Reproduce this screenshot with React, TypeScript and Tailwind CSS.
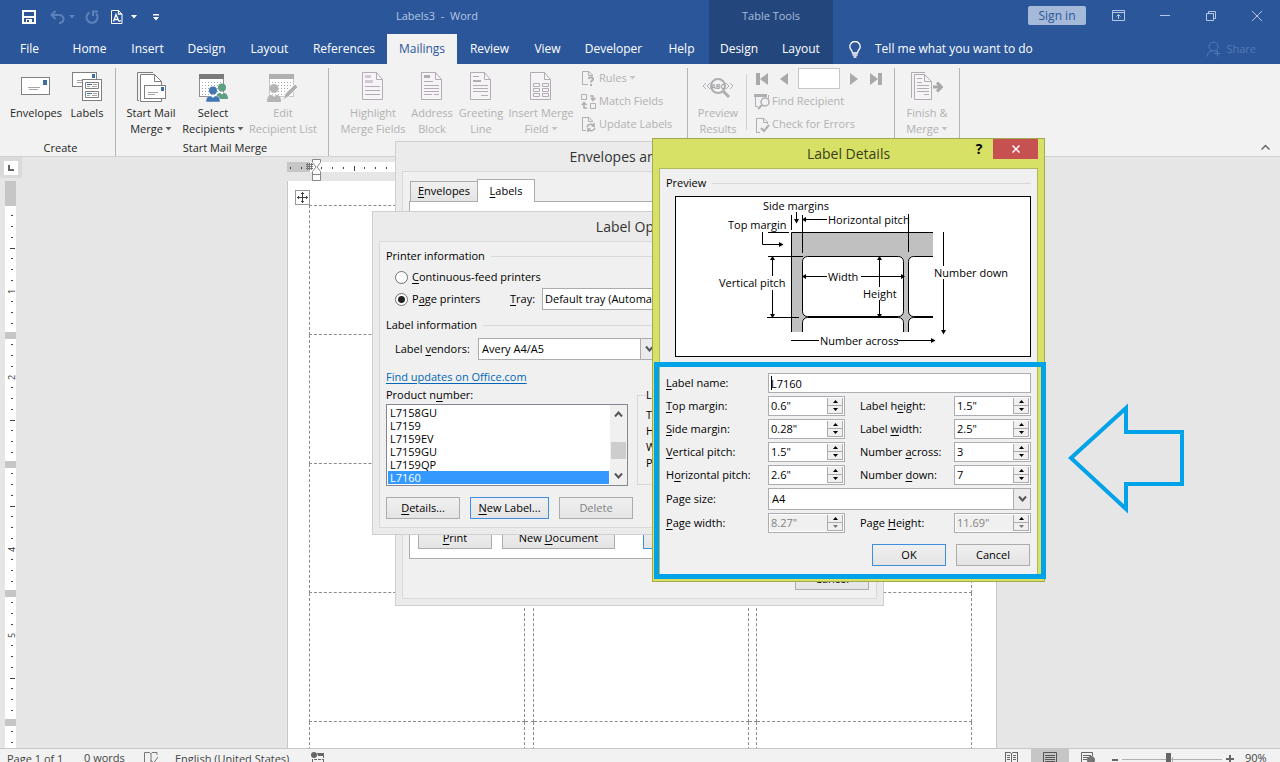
import { useState } from "react";
import type { ReactNode } from "react";

type BigButtonProps = {
  lines: string[];
  width: string;
  icon: ReactNode;
  disabled?: boolean;
  menu?: boolean;
};

type SpinProps = {
  id: string;
  label: ReactNode;
  value: string;
  disabled?: boolean;
};

const GREY = "#b1adb3";

const U = ({ children }: { children: string }) => (
  <span className="underline underline-offset-2">{children}</span>
);

const Caret = () => (
  <svg width="7" height="4" viewBox="0 0 7 4" className="inline-block ml-0.5 mb-0.5 opacity-70">
    <path d="M0.5 0h6L3.5 3.5z" fill="currentColor" />
  </svg>
);

const EnvelopeIcon = () => (
  <svg width="30" height="30" viewBox="0 0 30 30">
    <rect x="0.5" y="5.5" width="28" height="17" fill="#fff" stroke="#7f7f7f" />
    <rect x="22" y="8" width="4" height="5" fill="#3b6fa8" />
    <path d="M7 15.5h12M8 17.5h9" stroke="#a6a6a6" />
  </svg>
);

const LabelsIcon = () => (
  <svg width="30" height="30" viewBox="0 0 30 30">
    <rect x="0.5" y="0.5" width="24" height="14" fill="#fff" stroke="#7f7f7f" />
    <rect x="20" y="2" width="3" height="4" fill="#3b6fa8" />
    <path d="M5 8.5h7M5 10.5h5" stroke="#a6a6a6" />
    <rect x="10.5" y="7.5" width="19" height="21" fill="#fff" stroke="#7f7f7f" />
    <path d="M13.5 10.5h13v6h-13zM13.5 19.5h13v6h-13z" fill="#fff" stroke="#7f7f7f" />
    <path d="M15 12.5h5M15 21.5h5" stroke="#3b6fa8" />
    <path d="M21 12.5h4M15 14.5h3M20 14.5h5M21 21.5h4M15 23.5h3M20 23.5h5" stroke="#a6a6a6" />
  </svg>
);

const StartMergeIcon = () => (
  <svg width="30" height="30" viewBox="0 0 30 30">
    <path d="M3 28.5H1.5V0.5H17" fill="none" stroke="#7f7f7f" />
    <path d="M4.5 29.5V2.5H18.500L25.5 9.5V29.5z" fill="#fff" stroke="#7f7f7f" />
    <path d="M18.5 2.5V9.5H25.5" fill="none" stroke="#7f7f7f" />
    <rect x="8.5" y="13.5" width="21" height="13" fill="#fff" stroke="#7f7f7f" />
    <rect x="25" y="15" width="3" height="4" fill="#3b6fa8" />
    <path d="M12 20.5h10M12 22.5h7" stroke="#a6a6a6" />
  </svg>
);

const RecipientsIcon = ({ edit }: { edit?: boolean }) => (
  <svg width="32" height="30" viewBox="0 0 32 30">
    <rect x="2.5" y="2.5" width="24" height="22" fill="#fff" stroke={edit ? "#c9c6ca" : "#8f8f8f"} />
    <rect x="2" y="2" width="25" height="5" fill={edit ? "#b0b0b0" : "#7a7a7a"} />
    {[10, 13, 16, 19, 22].map((y) => (
      <path key={y} d={`M5 ${y}.5H25`} stroke="#a8a8a8" strokeDasharray="1 2" />
    ))}
    {edit ? (
      <>
        <circle cx="7" cy="16.5" r="4.5" fill="#b5b5b5" />
        <path d="M0 30c0-5 2-7 4-7h6c2 0 4 2 4 7z" fill="#b5b5b5" />
        <path d="M4.5 22.5L7 25l2.5-2.5" fill="#f2f2f2" />
        <path d="M16 28l2-6L28 12l3 3-10 10z" fill="#b0b0b0" stroke="#f2f2f2" />
      </>
    ) : (
      <>
        <circle cx="25" cy="15.5" r="4" fill="#5f9f82" />
        <path d="M19 27c0-4 2-6 3-6h5c2 0 4 2 4 6z" fill="#5f9f82" />
        <path d="M23 20.5l2 2 2-2" fill="#fff" />
        <circle cx="16" cy="18.5" r="4" fill="#3f76b3" />
        <path d="M9 30c0-5 2-6 4-6h6c2 0 4 1 4 6z" fill="#3f76b3" stroke="#f2f2f2" strokeWidth="0.5" />
        <path d="M13.5 23.5L16 26l2.5-2.5" fill="#fff" />
      </>
    )}
  </svg>
);

const PageIcon = ({ kind }: { kind: "highlight" | "address" | "greeting" | "insert" }) => (
  <svg width="22" height="30" viewBox="0 0 22 30">
    <path d="M0.5 0.5H14.5L20.5 7.5V27.5H0.5z" fill="#f7f4f8" stroke={GREY} />
    <path d="M14.5 0.5V7.5H20.5" fill="none" stroke={GREY} />
    {kind === "highlight" && (
      <>
        <path d="M3 4.5h6M3 9.5h8" stroke="#cfcbd1" strokeWidth="3" />
        <path d="M3 14.5h15M3 18.5h15M3 22.5h15" stroke={GREY} />
      </>
    )}
    {kind === "address" && (
      <>
        <path d="M3 4.5h6" stroke={GREY} strokeWidth="3" />
        <path d="M3 9.5h9M3 13.5h15M3 16.5h15M3 19.5h15M3 22.5h8M13 22.5h5" stroke={GREY} />
      </>
    )}
    {kind === "greeting" && (
      <>
        <path d="M3 9h8" stroke={GREY} strokeWidth="2" />
        <path d="M3 4.5h6M3 13.5h15M3 16.5h15M3 19.5h15M11 23.5h7" stroke={GREY} />
      </>
    )}
    {kind === "insert" && (
      <path d="M3.5 11.5h6v3h-6zM12.5 11.5h6v3h-6zM3.5 16.5h6v3h-6zM12.5 16.5h6v3h-6zM3.5 21.5h6v3h-6zM12.5 21.5h6v3h-6z" fill="none" stroke={GREY} />
    )}
  </svg>
);

const PreviewIcon = () => (
  <svg width="32" height="30" viewBox="0 0 32 30">
    <path d="M4 11l-3 3 3 3M8 11l-3 3 3 3M24 11l3 3-3 3M28 11l3 3-3 3" fill="none" stroke={GREY} />
    <circle cx="16" cy="14" r="7" fill="#f4f4f4" stroke={GREY} strokeWidth="2" />
    <path d="M21 19l6 6" stroke={GREY} strokeWidth="3" />
    <text x="16" y="16.5" fontSize="7" fontWeight="700" textAnchor="middle" fill="#a5a3a7">ABC</text>
  </svg>
);

const FinishIcon = () => (
  <svg width="32" height="30" viewBox="0 0 32 30">
    <path d="M0.5 26V0.5H14" fill="none" stroke={GREY} />
    <path d="M3.5 2.5H13.5L20.5 9.5V27.5H3.5z" fill="#f7f4f8" stroke={GREY} />
    <path d="M13.5 2.5V9.5H20.5M6 6.5h5M6 10.5h5M6 13.5h12M6 16.5h12M6 19.5h12M13 22.5h5" fill="none" stroke={GREY} />
    <path d="M22 15h8M26 10.5l4.5 4.5L26 19.5" fill="none" stroke="#a8a8a8" strokeWidth="3" />
  </svg>
);

const SmallIcon = ({ kind }: { kind: string }) => (
  <svg width="16" height="16" viewBox="0 0 16 16" fill="none" stroke={GREY}>
    {kind === "rules" && (
      <>
        <path d="M7 13.5H1.5V0.5H8L11.5 4V5M7.5 0.5V4.5H11" />
        <path d="M8 8c0-2.5 4-2.5 4 0 0 1.5-2 1.5-2 3.5M10 13v2" strokeWidth="2" />
      </>
    )}
    {kind === "match" && (
      <>
        <path d="M0.5 0.5h5v5h-5zM9.5 9.5h5v5h-5z" />
        <path d="M9 2h3v4M10 4l2 2.5L14.5 4M6 14H3V9M1 11l2-2.5L5.5 11" strokeWidth="1.5" />
      </>
    )}
    {kind === "update" && (
      <>
        <path d="M5 13.5H1.5V0.5H8L11.5 4V5M7.5 0.5V4.5H11" />
        <path d="M6 10c1-3 5-4 7-1V6M14 11c-1 3-5 4-7 1v3M13.5 9h-3M6.5 12h3" strokeWidth="1.5" />
      </>
    )}
    {kind === "find" && (
      <>
        <path d="M4 12.5H1.5V3M14.5 5V1" />
        <path d="M0 1.5h13" strokeWidth="3" />
        <circle cx="11" cy="8" r="4" strokeWidth="1.5" />
        <path d="M8 11l-4 4" strokeWidth="2" />
      </>
    )}
    {kind === "check" && (
      <>
        <path d="M6 15.5H2.5V1.5H10L13.5 5V7M9.5 1.5V5.5H13" />
        <path d="M7 11l3 3 5-6" strokeWidth="2" />
      </>
    )}
  </svg>
);

const BigButton = ({ lines, width, icon, disabled, menu }: BigButtonProps) => (
  <button
    disabled={disabled}
    className={`${width} flex flex-col items-center text-[11px] leading-4 whitespace-nowrap ${
      disabled ? "text-[#b1b1b1]" : "text-[#262626]"
    }`}
  >
    <span className="h-9 flex items-center">{icon}</span>
    {lines.map((line, i) => (
      <span key={line}>
        {line}
        {menu && i === lines.length - 1 && <Caret />}
      </span>
    ))}
  </button>
);

const SmallButton = ({ kind, label, menu }: { kind: string; label: string; menu?: boolean }) => (
  <button disabled className="h-[23px] flex items-center gap-0.5 text-[11px] text-[#b1b1b1] whitespace-nowrap">
    <SmallIcon kind={kind} />
    <span>
      {label}
      {menu && <Caret />}
    </span>
  </button>
);

const Group = ({ label, className, children }: { label?: string; className: string; children: ReactNode }) => (
  <div className={`${className} shrink-0 h-[88px] mt-1 border-r border-[#b5b5b5] flex flex-col justify-between text-[#262626]`}>
    <div className="flex items-start pt-px">{children}</div>
    <div className="text-[11px] leading-4 text-center">{label}</div>
  </div>
);

const Ribbon = () => (
  <div className="h-[93px] shrink-0 bg-[#f2f2f2] border-b border-[#d2d2d2] flex">
    <Group label="Create" className="w-[116px] pl-1.5">
      <BigButton lines={["Envelopes"]} width="w-[60px]" icon={<EnvelopeIcon />} />
      <BigButton lines={["Labels"]} width="w-[42px]" icon={<LabelsIcon />} />
    </Group>
    <Group label="Start Mail Merge" className="w-[213px] pl-1.5">
      <BigButton lines={["Start Mail", "Merge"]} width="w-[58px]" icon={<StartMergeIcon />} menu />
      <BigButton lines={["Select", "Recipients"]} width="w-[66px]" icon={<RecipientsIcon />} menu />
      <BigButton lines={["Edit", "Recipient List"]} width="w-[74px]" icon={<RecipientsIcon edit />} disabled />
    </Group>
    <Group className="w-[359px] pl-2">
      <BigButton lines={["Highlight", "Merge Fields"]} width="w-[72px]" icon={<PageIcon kind="highlight" />} disabled />
      <BigButton lines={["Address", "Block"]} width="w-[46px]" icon={<PageIcon kind="address" />} disabled />
      <BigButton lines={["Greeting", "Line"]} width="w-[52px]" icon={<PageIcon kind="greeting" />} disabled />
      <BigButton lines={["Insert Merge", "Field"]} width="w-[68px]" icon={<PageIcon kind="insert" />} disabled menu />
      <div className="pl-1.5 -mt-0.5">
        <SmallButton kind="rules" label="Rules" menu />
        <SmallButton kind="match" label="Match Fields" />
        <SmallButton kind="update" label="Update Labels" />
      </div>
    </Group>
    <Group className="w-[207px] pl-1.5">
      <BigButton lines={["Preview", "Results"]} width="w-[48px]" icon={<PreviewIcon />} disabled />
      <div className="w-px h-14 mt-[5px] ml-1 bg-[#d0d0d0]" />
      <div className="pl-[7px] -mt-0.5">
        <div className="h-[23px] flex items-center text-[#a9a9a9]">
          <button disabled aria-label="First record" className="w-6 pl-0.5">
            <svg width="12" height="12" viewBox="0 0 12 12" fill="currentColor"><path d="M0 0h4v12H0zM12 0v12L4 6z" /></svg>
          </button>
          <button disabled aria-label="Previous record" className="w-5 pl-0.5">
            <svg width="8" height="12" viewBox="0 0 8 12" fill="currentColor"><path d="M8 0v12L0 6z" /></svg>
          </button>
          <input aria-label="Record" disabled className="w-[42px] h-[21px] bg-white border border-[#c6c6c6]" />
          <button disabled aria-label="Next record" className="w-7 pl-2.5">
            <svg width="8" height="12" viewBox="0 0 8 12" fill="currentColor"><path d="M0 0v12l8-6z" /></svg>
          </button>
          <button disabled aria-label="Last record" className="w-4 pl-0.5">
            <svg width="12" height="12" viewBox="0 0 12 12" fill="currentColor"><path d="M8 0h4v12H8zM0 0v12l8-6z" /></svg>
          </button>
        </div>
        <SmallButton kind="find" label="Find Recipient" />
        <SmallButton kind="check" label="Check for Errors" />
      </div>
    </Group>
    <Group className="w-[65px] pl-1">
      <BigButton lines={["Finish &", "Merge"]} width="w-[56px]" icon={<FinishIcon />} disabled menu />
    </Group>
    <button aria-label="Collapse ribbon" className="ml-auto self-end mr-2.5 mb-1.5">
      <svg width="9" height="6" viewBox="0 0 9 6" fill="none" stroke="#666" strokeWidth="1.5"><path d="M0.5 5.5l4-4 4 4" /></svg>
    </button>
  </div>
);

const QuickAccess = () => (
  <div className="flex items-center h-[34px] pl-[22px] w-[396px] text-white">
    <button aria-label="Save">
      <svg width="14" height="14" viewBox="0 0 14 14" fill="none" stroke="#fff" strokeWidth="2"><path d="M1 1h12v12H1zM2 7h10" /><path d="M4 13v-4h6v4" fill="#fff" stroke="none" /><path d="M5 10h2v2H5z" fill="#2b579a" stroke="none" /></svg>
    </button>
    <button disabled aria-label="Undo" className="ml-3.5 flex items-center gap-1 text-[#5c81bb]">
      <svg width="15" height="14" viewBox="0 0 15 14" fill="none" stroke="currentColor" strokeWidth="2"><path d="M5.5 1L1.5 5l4 4M2 5h7c6 0 6 8 0 8" /></svg>
      <svg width="6" height="4" viewBox="0 0 6 4" fill="currentColor"><path d="M0 0h6L3 3.5z" /></svg>
    </button>
    <button disabled aria-label="Redo" className="ml-2.5 text-[#5c81bb]">
      <svg width="14" height="14" viewBox="0 0 14 14" fill="none" stroke="currentColor" strokeWidth="2"><path d="M4.5 2.5A5.5 5.5 0 1 0 11 3.5M8 6V1.5h5" /></svg>
    </button>
    <button aria-label="Print preview" className="ml-3 flex items-center gap-2">
      <svg width="12" height="14" viewBox="0 0 12 14" fill="none" stroke="#fff"><path d="M0.5 0.5h7l3.5 3.5v9.5H0.5z" /><path d="M7.5 0.5v3.5H11M2.5 11.5L5 4.5l3 7M3.5 9.5h4M8 11.5l2-1" strokeWidth="1.3" /></svg>
      <svg width="6" height="4" viewBox="0 0 6 4" fill="currentColor"><path d="M0 0h6L3 3.5z" /></svg>
    </button>
    <button aria-label="Customize toolbar" className="ml-4">
      <svg width="6" height="7" viewBox="0 0 6 7" fill="#fff"><path d="M0 0h6v1.5H0zM0 3h6L3 6.5z" /></svg>
    </button>
  </div>
);

const tabs = [
  { name: "File", width: "w-[59px]" },
  { name: "Home", width: "w-[61px]" },
  { name: "Insert", width: "w-[55px]" },
  { name: "Design", width: "w-[63px]" },
  { name: "Layout", width: "w-[63px]" },
  { name: "References", width: "w-[86px]" },
  { name: "Mailings", width: "w-[70px]" },
  { name: "Review", width: "w-[65px]" },
  { name: "View", width: "w-[51px]" },
  { name: "Developer", width: "w-[81px]" },
  { name: "Help", width: "w-[55px]" },
];

const Header = () => {
  const [active, setActive] = useState("Mailings");
  return (
    <header className="shrink-0 h-16 bg-[#2b579a] flex text-white">
      <div className="flex flex-col">
        <div className="flex items-center">
          <QuickAccess />
          <h1 className="pb-0.5 text-[11px] text-[#b4c8e6] whitespace-pre">Labels3  -  Word</h1>
        </div>
        <nav className="flex h-[30px]">
          {tabs.map((tab) => (
            <button
              key={tab.name}
              onClick={() => setActive(tab.name)}
              className={`${tab.width} text-xs ${tab.name === active ? "bg-[#f2f2f2] text-[#2b579a]" : ""}`}
            >
              {tab.name}
            </button>
          ))}
        </nav>
      </div>
      <div className="w-[124px] bg-[#23477d] flex flex-col">
        <div className="h-[34px] pb-0.5 flex items-center justify-center text-[11px] text-[#a9bddb]">Table Tools</div>
        <div className="h-[30px] flex">
          <button className="w-[60px] text-xs">Design</button>
          <button className="w-[64px] text-xs">Layout</button>
        </div>
      </div>
      <div className="flex-1 flex flex-col text-[#b4c8e6]">
        <div className="h-[34px] flex items-center justify-end pb-[3px]">
          <button className="w-[58px] h-[19px] rounded-xs bg-[#a5b9d8] text-[#2b579a] text-xs leading-[18px]">Sign in</button>
          <button aria-label="Ribbon display options" className="ml-[26px]">
            <svg width="13" height="11" viewBox="0 0 13 11" fill="none" stroke="currentColor"><path d="M0.5 0.5h12v10h-12zM0.5 2.5h12M6.5 9V4.5M4.5 6.5l2-2 2 2" /></svg>
          </button>
          <button aria-label="Minimize" className="ml-[35px]">
            <svg width="10" height="11" viewBox="0 0 10 11" stroke="currentColor"><path d="M0 5.5h10" /></svg>
          </button>
          <button aria-label="Restore" className="ml-9">
            <svg width="10" height="11" viewBox="0 0 10 11" fill="none" stroke="currentColor"><path d="M0.5 3.5h7v7h-7zM2.5 3V1.5h7v7H8" /></svg>
          </button>
          <button aria-label="Close" className="ml-9 mr-[18px]">
            <svg width="10" height="10" viewBox="0 0 10 10" stroke="currentColor"><path d="M0 0l10 10M10 0L0 10" /></svg>
          </button>
        </div>
        <div className="h-[30px] flex items-center justify-between pl-4 pr-6">
          <button className="flex items-center gap-3.5 text-xs text-white">
            <svg width="12" height="17" viewBox="0 0 12 17" fill="none" stroke="#fff" strokeWidth="1.3"><path d="M3.5 12c0-3-2.7-3.5-2.7-6.3a5.2 5.2 0 0 1 10.4 0C11.2 8.5 8.5 9 8.5 12zM3.5 14h5M4.5 16h3" /></svg>
            Tell me what you want to do
          </button>
          <button disabled className="flex items-center gap-1 text-[11px] text-[#5478b3]">
            <svg width="16" height="16" viewBox="0 0 16 16" fill="none" stroke="currentColor"><circle cx="7.5" cy="5.5" r="4.5" /><path d="M1 15.5c0-3 2-5 5-5.5M9 9.5l2 1.5M11.5 9.5v6M8.5 12.5h6" /></svg>
            Share
          </button>
        </div>
      </div>
    </header>
  );
};

const VerticalRuler = () => (
  <svg width="11" height="567" viewBox="0 181 11 567" className="overflow-visible">
    <rect y="181" width="11" height="567" fill="#fff" />
    <rect y="181" width="11" height="25" fill="#c6c6c6" />
    {[0, 1, 2, 3, 4].map((n) => (
      <g key={n}>
        {n < 4 && <rect y={332 + n * 129} width="11" height="7" fill="#c6c6c6" />}
        {[215, 226, 237, 258, 269, 280, 301, 312, 323].map((y) => (
          <path key={y} d={`M6 ${y + n * 129 + 0.5}h2`} stroke="#444" />
        ))}
      </g>
    ))}
    {[248, 420, 506, 678].map((y) => (
      <path key={y} d={`M5 ${y + 0.5}h5`} stroke="#444" />
    ))}
    {[1, 2, 4, 5].map((n) => (
      <g key={n}>
        <rect x="4" y={201 + n * 86} width="7" height="9" fill="#fff" />
        <text transform={`translate(10 ${208 + n * 86}) rotate(-90)`} fontSize="9" fill="#333">{n}</text>
      </g>
    ))}
  </svg>
);

const HorizontalRuler = () => (
  <svg width="710" height="22" viewBox="287 159 710 22" className="block shrink-0">
    <rect x="287" y="162" width="710" height="10" fill="#fff" />
    <rect x="287" y="162" width="23" height="10" fill="#c6c6c6" />
    {[290, 301, 321, 332, 343, 364, 375, 386].map((x) => (
      <path key={x} d={`M${x}.5 167v2`} stroke="#444" />
    ))}
    <path d="M354.5 166v5" stroke="#444" />
    <path d="M306 164.5h7M306 166.5h7M306 168.5h7M307.5 163v7M309.5 163v7M311.5 163v7" stroke="#777" />
    <path d="M312.5 159.5h8v3l-3.5 4.5 3.5 4.5v9h-8v-9l3.5-4.5-3.5-4.5zM312.5 174.5h8" fill="#fff" stroke="#888" />
  </svg>
);

const cell = "border border-dashed border-[#8c8c8c]";

const DocumentArea = () => (
  <main className="flex-1 min-h-0 overflow-hidden bg-[#e6e6e6] flex">
    <div className="w-[22px] shrink-0">
      <div className="w-full h-[21px] bg-[#dadada] flex items-center justify-center">
        <button aria-label="Tab selector" className="w-3.5 h-3.5 bg-white flex items-center justify-center">
          <svg width="6" height="6" viewBox="0 0 6 6" stroke="#666" strokeWidth="2" fill="none"><path d="M1 0v5h5" /></svg>
        </button>
      </div>
      <div className="pt-[3px] pl-[5px]"><VerticalRuler /></div>
    </div>
    <div className="flex-1 flex flex-col items-center pr-[18px] pt-0.5">
      <HorizontalRuler />
      <div className="relative w-[710px] h-[580px] shrink-0 bg-white border-x border-[#c6c6c6] pt-6 pl-[21px]">
        <div className="absolute left-[7px] top-[9px] w-[15px] h-[15px] bg-white border border-[#999] flex items-center justify-center">
          <svg width="11" height="11" viewBox="0 0 11 11" stroke="#444" fill="none"><path d="M5.5 0v11M0 5.5h11M4 2l1.5-1.5L7 2M4 9l1.5 1.5L7 9M2 4L0.5 5.5 2 7M9 4l1.5 1.5L9 7" /></svg>
        </div>
        <table className="table-fixed border-collapse w-[663px]">
          <tbody>
            {[0, 1, 2, 3, 4].map((row) => (
              <tr key={row} className="h-[129px]">
                <td className={`${cell} w-[215px]`} />
                <td className={`${cell} w-[9px]`} />
                <td className={`${cell} w-[215px]`} />
                <td className={`${cell} w-[8px]`} />
                <td className={`${cell} w-[215px]`} />
              </tr>
            ))}
          </tbody>
        </table>
      </div>
    </div>
  </main>
);

const StatusBar = () => (
  <footer className="shrink-0 h-3.5 overflow-hidden bg-[#f2f2f2] border-t border-[#c6c6c6] flex items-start text-[11px] leading-4 text-[#444] whitespace-nowrap">
    <span className="pl-[7px] pt-0.5 w-[84px]">Page 1 of 1</span>
    <span className="pt-px w-[60px]">0 words</span>
    <svg width="14" height="12" viewBox="0 0 14 12" className="mt-[3px]" fill="none" stroke="#777"><path d="M0.5 12V0.5h5l1.5 1.5V12M6.5 2L8 0.5h5V3M7 8l2.5 3L14 5" /></svg>
    <span className="pl-[17px] pt-0.5 w-[153px]">English (United States)</span>
    <svg width="13" height="12" viewBox="0 0 13 12" className="mt-[3px]" fill="#666"><circle cx="3" cy="3" r="3" /><path d="M6 1h7v3H7z" /><path d="M1.5 7v5M12.5 3v9M3 7.5h9M3 10.5h9" stroke="#666" strokeDasharray="3 1" /></svg>
    <div className="ml-auto flex">
      <svg width="13" height="12" viewBox="0 0 13 12" className="mt-[3px]" fill="none" stroke="#666"><path d="M0.5 0v12M12.5 0v12M6.5 1v11M0 0.5h5l1.5 1 1.5-1h5M2 3.5h3M2 5.5h3M2 7.5h3M8 3.5h3M8 5.5h3M8 7.5h3" /></svg>
      <div className="ml-[13px] w-[38px] h-3.5 bg-[#c6c6c6] flex justify-center">
        <svg width="14" height="12" viewBox="0 0 14 12" className="mt-[3px]" fill="none" stroke="#555"><path d="M0.5 12V0.5h13V12M2 3.5h10M2 5.5h10M2 7.5h10M2 9.5h10" /></svg>
      </div>
      <svg width="15" height="12" viewBox="0 0 15 12" className="ml-3 mt-[3px]" fill="none" stroke="#666"><path d="M0.5 12V0.5h11V4M2 3.5h8M2 5.5h5M2 7.5h4" /><circle cx="10" cy="8" r="3.5" fill="#777" /></svg>
      <span className="ml-4 mt-2.5 w-1.5 h-0.5 bg-[#666]" />
      <svg width="100" height="12" viewBox="0 0 100 12" className="ml-1 mt-[3px]"><path d="M0 7.5h100M50.5 5v5" stroke="#b0b0b0" /><rect x="44" y="1" width="5" height="11" fill="#666" /></svg>
      <svg width="8" height="12" viewBox="0 0 8 12" className="ml-1 mt-[3px]" stroke="#666" strokeWidth="2"><path d="M0 7h8M4 3v8" /></svg>
      <span className="pl-[11px] pt-px w-[46px]">90%</span>
    </div>
  </footer>
);

const DialogButton = ({ children, primary, disabled, className = "w-[74px]" }: {
  children: ReactNode;
  primary?: boolean;
  disabled?: boolean;
  className?: string;
}) => (
  <button
    disabled={disabled}
    className={`${className} h-[22px] border bg-gradient-to-b from-[#f0f0f0] to-[#e4e4e4] text-[11px] leading-5 ${
      primary ? "border-[#3c8fde]" : "border-[#acacac]"
    } ${disabled ? "text-[#838383]" : "text-black"}`}
  >
    {children}
  </button>
);

const Section = ({ title, id }: { title: string; id: string }) => (
  <div className="flex items-center gap-1.5 leading-4">
    <h3 id={id}>{title}</h3>
    <div className="flex-1 h-px bg-[#d9d9d9]" />
  </div>
);

const Chevron = () => (
  <svg width="9" height="6" viewBox="0 0 9 6" fill="none" stroke="#555" strokeWidth="2"><path d="M1 0.5L4.5 4.5 8 0.5" /></svg>
);

const EnvelopesDialog = () => (
  <section aria-label="Envelopes and Labels" className="absolute left-[395px] top-[141px] w-[489px] h-[465px] bg-[#ebebeb] border border-[#cfcfcf] px-1.5 pb-1.5 flex flex-col text-[11px]">
    <h2 className="h-[29px] leading-[29px] text-sm text-center text-[#333]">Envelopes and Labels</h2>
    <div className="flex-1 bg-[#f0f0f0] border border-[#d9d9d9] pt-[7px] px-1.5 pb-2 flex flex-col">
      <div className="flex items-end pl-px">
        <button className="w-[67px] h-5 border border-b-0 border-r-0 border-[#acacac] bg-gradient-to-b from-[#f0f0f0] to-[#e4e4e4]"><U>E</U>nvelopes</button>
        <button className="relative w-[58px] h-[23px] -mb-px border border-b-0 border-[#acacac] bg-white"><U>L</U>abels</button>
      </div>
      <div className="h-[358px] bg-white border border-[#acacac] flex items-end gap-2.5 pl-2 pb-[9px]">
        <DialogButton><U>P</U>rint</DialogButton>
        <DialogButton className="w-[113px]">New <U>D</U>ocument</DialogButton>
        <span className="w-2" />
        <DialogButton primary className="w-[113px]"><U>O</U>ptions...</DialogButton>
      </div>
      <div className="flex-1 flex items-end justify-end pr-px"><DialogButton>Cancel</DialogButton></div>
    </div>
  </section>
);

const products = ["L7158GU", "L7159", "L7159EV", "L7159GU", "L7159QP", "L7160"];

const OptionsDialog = () => {
  const [selected, setSelected] = useState("L7160");
  return (
    <section aria-label="Label Options" className="absolute left-[372px] top-[211px] w-[538px] h-[324px] bg-[#ebebeb] border border-[#cfcfcf] px-1.5 pb-1.5 flex flex-col text-[11px]">
      <h2 className="h-[29px] leading-[29px] text-sm text-center text-[#333]">Label Options</h2>
      <div className="flex-1 bg-[#f0f0f0] border border-[#d9d9d9] px-1.5 pt-1.5">
        <Section title="Printer information" id="printer-info" />
        <label className="flex items-center gap-1 h-[26px] pl-[9px]">
          <input type="radio" name="printer" className="appearance-none w-[13px] h-[13px] rounded-full border border-[#707070] bg-white" />
          <span><U>C</U>ontinuous-feed printers</span>
        </label>
        <div className="flex items-center h-5 -mt-px pl-[9px]">
          <label className="flex items-center gap-1 w-[115px]">
            <input type="radio" name="printer" defaultChecked className="appearance-none w-[13px] h-[13px] rounded-full border border-[#707070] bg-white checked:bg-[radial-gradient(circle,#222_3px,white_4px)]" />
            <span>P<U>a</U>ge printers</span>
          </label>
          <label htmlFor="tray" className="w-8"><U>T</U>ray:</label>
          <select id="tray" className="appearance-none w-[250px] h-[22px] px-0.5 bg-white border border-[#acacac]">
            <option>Default tray (Automatically Select)</option>
          </select>
        </div>
        <div className="mt-2"><Section title="Label information" id="label-info" /></div>
        <div className="flex items-center pl-[9px] mt-[5px]">
          <label htmlFor="vendors" className="w-[83px]">Label <U>v</U>endors:</label>
          <div className="flex w-[180px]">
            <select id="vendors" className="appearance-none flex-1 h-[22px] px-[3px] bg-white border border-[#acacac]">
              <option>Avery A4/A5</option>
            </select>
            <span className="w-[18px] -ml-px border border-[#acacac] bg-[#ebebeb] flex items-center justify-center"><Chevron /></span>
          </div>
        </div>
        <div className="flex gap-[9px] mt-[9px] leading-4">
          <div className="w-[242px]">
            <a href="#updates" className="block h-[18px] text-[#0066b8] underline underline-offset-2">Find updates on Office.com</a>
            <div id="product-label" className="h-[17px]">Product n<U>u</U>mber:</div>
            <div className="h-[82px] border border-[#828790] bg-white flex">
              <ul role="listbox" aria-labelledby="product-label" className="flex-1 p-px">
                {products.map((name) => (
                  <li key={name} role="option" aria-selected={name === selected}>
                    <button
                      onClick={() => setSelected(name)}
                      className={`block w-full h-[13px] leading-[13px] pl-0.5 text-left text-[11px] ${
                        name === selected ? "bg-[#3399ff] text-white" : ""
                      }`}
                    >
                      {name}
                    </button>
                  </li>
                ))}
              </ul>
              <div className="w-[17px] bg-[#f0f0f0] flex flex-col items-center py-1.5">
                <span className="h-1.5 flex rotate-180"><Chevron /></span>
                <span className="w-[15px] h-[17px] mt-auto mb-3.5 bg-[#cdcdcd]" />
                <Chevron />
              </div>
            </div>
          </div>
          <fieldset className="flex-1 mt-[18px] h-[98px] border border-[#d9d9d9] pl-2">
            <legend>Label information</legend>
            <div className="pt-1">
              <p>Type:</p>
              <p>Height:</p>
              <p>Width:</p>
              <p>Page size:</p>
            </div>
          </fieldset>
        </div>
        <div className="flex gap-2.5 mt-[11px]">
          <DialogButton><U>D</U>etails...</DialogButton>
          <DialogButton primary className="w-[79px]"><U>N</U>ew Label...</DialogButton>
          <DialogButton disabled>Delete</DialogButton>
        </div>
      </div>
    </section>
  );
};

const PreviewDiagram = () => (
  <div className="w-[356px] border border-black bg-white">
    <svg width="354" height="159" viewBox="26 62 354 159" className="block" fontSize="11">
      <rect x="141" y="97" width="142" height="100" fill="#c0c0c0" />
      <g fill="#fff" stroke="#000">
        <rect x="152.5" y="121.5" width="101" height="60" rx="5" />
        <path d="M283 121.5H263.5a5 5 0 0 0-5 5v50a5 5 0 0 0 5 5H283" />
        <path d="M152.5 197v-9.5a5 5 0 0 1 5-5h91a5 5 0 0 1 5 5V197" />
        <path d="M283 182.5V197H258.5v-9.5a5 5 0 0 1 5-5H283" stroke="none" />
        <path d="M258.5 197v-9.5a5 5 0 0 1 5-5H283" fill="none" />
      </g>
      <path d="M141.5 197V97.5H283" fill="none" stroke="#000" />
      <g stroke="#000" fill="none">
        <path d="M141.5 80v15M146.5 77v8M152.5 80v38M154 84.5h23M258.5 79v38" />
        <path d="M118 97.5h21M112.5 97v12.5H130M118 121.5h35M117 182.5h32" />
        <path d="M122.5 122v19M122.5 155v27M154 141.5h23M211 141.5h41M229.5 122v30M229.5 165v17" />
        <path d="M293.5 97v34M293.5 144v52M141 205.5h28M247 205.5h35" />
      </g>
      <g fill="#000">
        <path d="M144 84h5l-2.5 4.5zM156 82v5l-4-2.5zM129 107v5l4.5-2.5zM120 125h5l-2.5-4zM120 179h5l-2.5 4zM156 139v5l-4-2.5zM251 139v5l4-2.5zM227 125h5l-2.5-4zM227 179h5l-2.5 4zM291 195h5l-2.5 4.5zM281 203v5l4.5-2.5z" />
        <text x="113" y="75">Side margins</text>
        <text x="178" y="89">Horizontal pitch</text>
        <text x="78" y="94">Top margin</text>
        <text x="69" y="152">Vertical pitch</text>
        <text x="178" y="146">Width</text>
        <text x="213" y="163">Height</text>
        <text x="284" y="142">Number down</text>
        <text x="170" y="210">Number across</text>
      </g>
    </svg>
  </div>
);

const Spin = ({ id, label, value, disabled }: SpinProps) => (
  <>
    <label htmlFor={id}>{label}</label>
    <div className="w-[77px] h-5 border border-[#abadb3] bg-white p-px flex">
      <input
        id={id}
        defaultValue={value}
        disabled={disabled}
        className={`flex-1 min-w-0 pl-px leading-4 ${disabled ? "bg-[#f0f0f0] text-[#838383]" : "bg-white"}`}
      />
      <span className="w-4 flex flex-col">
        <button aria-label="Increase" disabled={disabled} className="flex-1 border border-t-0 border-[#acacac] bg-[#f0f0f0] flex items-center justify-center">
          <svg width="5" height="3" viewBox="0 0 5 3"><path d="M0 3h5L2.5 0z" /></svg>
        </button>
        <button aria-label="Decrease" disabled={disabled} className="flex-1 border border-t-0 border-[#acacac] bg-[#f0f0f0] flex items-center justify-center">
          <svg width="5" height="3" viewBox="0 0 5 3"><path d="M0 0h5L2.5 3z" fill={disabled ? "#777" : "#000"} /></svg>
        </button>
      </span>
    </div>
  </>
);

const DetailsDialog = () => (
  <section aria-label="Label Details" className="absolute left-[652px] top-[138px] w-[393px] h-[444px] bg-[#d6e165] border border-[#a3a94f] px-1.5 pb-1.5 flex flex-col text-[11px]">
    <div className="relative h-[29px]">
      <h2 className="leading-[30px] text-sm text-center text-[#3a3d1c]">Label Details</h2>
      <div className="absolute right-0 top-0 flex">
        <button aria-label="Help" className="w-7 h-5 text-sm leading-5 font-bold">?</button>
        <button aria-label="Close" className="w-[45px] h-5 bg-[#c75050] flex items-center justify-center">
          <svg width="8" height="8" viewBox="0 0 8 8" stroke="#fff" strokeWidth="1.5"><path d="M0.5 0.5l7 7M7.5 0.5l-7 7" /></svg>
        </button>
      </div>
    </div>
    <div className="flex-1 bg-[#f0f0f0] border border-[#b1b860] px-1.5 pt-1.5">
      <Section title="Preview" id="preview" />
      <div className="pl-[9px] mt-[5px]"><PreviewDiagram /></div>
      <form className="mt-4 grid grid-cols-[102px_92px_94px_77px] gap-y-[3px] items-center" onSubmit={(ev) => ev.preventDefault()}>
        <label htmlFor="name"><U>L</U>abel name:</label>
        <div className="col-span-3 relative flex">
          <input id="name" defaultValue="L7160" className="flex-1 h-5 px-0.5 bg-white border border-[#abadb3]" />
          <span className="absolute left-[3px] top-[3px] w-px h-3.5 bg-black" />
        </div>
        <Spin id="top" label={<><U>T</U>op margin:</>} value={'0.6"'} />
        <Spin id="height" label={<>Label h<U>e</U>ight:</>} value={'1.5"'} />
        <Spin id="side" label={<><U>S</U>ide margin:</>} value={'0.28"'} />
        <Spin id="width" label={<>Label <U>w</U>idth:</>} value={'2.5"'} />
        <Spin id="vpitch" label={<><U>V</U>ertical pitch:</>} value={'1.5"'} />
        <Spin id="across" label={<>Number <U>a</U>cross:</>} value="3" />
        <Spin id="hpitch" label={<>H<U>o</U>rizontal pitch:</>} value={'2.6"'} />
        <Spin id="down" label={<>Number <U>d</U>own:</>} value="7" />
        <label htmlFor="size">Page size:</label>
        <div className="col-span-3 flex">
          <select id="size" className="appearance-none flex-1 h-[22px] px-[3px] bg-white border border-[#acacac]">
            <option>A4</option>
          </select>
          <span className="w-[18px] -ml-px border border-[#acacac] bg-[#ebebeb] flex items-center justify-center"><Chevron /></span>
        </div>
        <Spin id="pwidth" label={<><U>P</U>age width:</>} value={'8.27"'} disabled />
        <Spin id="pheight" label={<>Page <U>H</U>eight:</>} value={'11.69"'} disabled />
        <div className="col-span-4 flex justify-end gap-2.5 mt-2 pr-px">
          <DialogButton primary>OK</DialogButton>
          <DialogButton>Cancel</DialogButton>
        </div>
      </form>
    </div>
  </section>
);

const Callout = () => (
  <>
    <div className="absolute left-[654px] top-[362px] w-[392px] h-[217px] border-[5px] border-[#00a2e8] pointer-events-none" />
    <svg width="118" height="112" viewBox="0 0 118 112" className="absolute left-[1068px] top-[402px] pointer-events-none">
      <path d="M3 56L58 6v24h56v52H58v25z" fill="none" stroke="#00a2e8" strokeWidth="4" />
    </svg>
  </>
);

const App = () => (
  <div className="relative h-screen overflow-hidden flex flex-col font-['Open_Sans','Noto_Sans',sans-serif]">
    <Header />
    <Ribbon />
    <DocumentArea />
    <StatusBar />
    <EnvelopesDialog />
    <OptionsDialog />
    <DetailsDialog />
    <Callout />
  </div>
);

export default App;
